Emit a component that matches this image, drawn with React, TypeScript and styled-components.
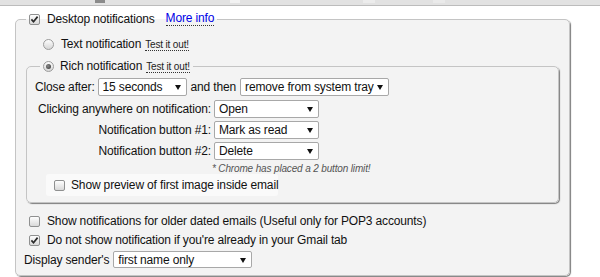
import React from "react";
import styled, { createGlobalStyle } from "styled-components";

const GlobalStyle = createGlobalStyle`
  html, body { margin: 0; padding: 0; background: #fff; }
  body {
    width: 600px; height: 277px; overflow: hidden;
    font-family: "Liberation Sans", Arial, sans-serif;
    font-size: 12px; letter-spacing: -0.15px; color: #111;
  }
`;

const TopStrip = styled.div`
  height: 5px;
  background: #e2e2e2;
  border-bottom: 1px solid #bcbcbc;
  display: flex;
  align-items: flex-start;
`;

const StripMark = styled.span<{ $x: number; $w: number; $c: string }>`
  margin-left: ${(p) => p.$x}px;
  width: ${(p) => p.$w}px;
  height: 3px;
  background: ${(p) => p.$c};
`;

const Panel = styled.fieldset`
  box-sizing: border-box;
  min-width: 0;
  margin: 6px 0 0 15px;
  width: 555px;
  border: 1px solid #c4c4c4;
  border-radius: 5px;
  background: #f3f3f3;
  box-shadow: 1px 1px 1px #7d7d7d;
  padding: 10px 10px 7px 10px;
`;

const SubPanel = styled.fieldset`
  box-sizing: border-box;
  min-width: 0;
  margin: 7px 0 0 0;
  border: 1px solid #c4c4c4;
  border-radius: 5px;
  background: #f3f3f3;
  box-shadow: 1px 1px 1px #7d7d7d;
  padding: 5px 8px 6px 8px;
`;

const Legend = styled.legend<{ $shift?: number }>`
  display: flex;
  align-items: center;
  height: 14px;
  line-height: 14px;
  padding: 0 3px;
  margin-left: ${(p) => p.$shift ?? 0}px;
  white-space: nowrap;
`;

const Row = styled.div<{ $mt?: number; $ml?: number; $h?: number; $gap?: number }>`
  display: flex;
  align-items: center;
  height: ${(p) => p.$h ?? 16}px;
  margin-top: ${(p) => p.$mt ?? 0}px;
  margin-left: ${(p) => p.$ml ?? 0}px;
  gap: ${(p) => p.$gap ?? 7}px;
  white-space: nowrap;
`;

const Label = styled.span<{ $ml?: number; $mr?: number }>`
  white-space: nowrap;
  margin-left: ${(p) => p.$ml ?? 0}px;
  margin-right: ${(p) => p.$mr ?? 0}px;
`;

const MoreInfo = styled.a`
  color: #0000e6;
  text-decoration: none;
  border-bottom: 1px dotted #333;
  line-height: 13px;
  margin-left: 11px;
  cursor: pointer;
`;

const TestLink = styled.span<{ $ml?: number }>`
  font-size: 10px;
  color: #222;
  border-bottom: 1px dotted #333;
  line-height: 11px;
  margin-left: ${(p) => p.$ml ?? 0}px;
  margin-top: 2px;
  cursor: pointer;
`;

const CheckBox = styled.span`
  flex: none;
  display: inline-flex;
  align-items: center;
  justify-content: center;
  box-sizing: border-box;
  width: 11px;
  height: 11px;
  border: 1px solid #8f9090;
  border-radius: 2px;
  background: linear-gradient(#fefefe, #d9d9d9);
`;

const RadioDot = styled.span<{ $on?: boolean }>`
  flex: none;
  display: inline-flex;
  align-items: center;
  justify-content: center;
  box-sizing: border-box;
  width: 11px;
  height: 11px;
  border: 1px solid #9c9c9c;
  border-radius: 50%;
  background: linear-gradient(#fdfdfd, #d6d6d6);
  &::after {
    content: "";
    display: ${(p) => (p.$on ? "block" : "none")};
    width: 5px;
    height: 5px;
    border-radius: 50%;
    background: radial-gradient(circle at 40% 40%, #8a8a8a, #333);
  }
`;

const Check = ({ on }: { on?: boolean }) => (
  <CheckBox>
    {on && (
      <svg width="9" height="9" viewBox="0 0 9 9">
        <path d="M1.4 4.4 L3.5 6.7 L7.6 1.6" fill="none" stroke="#2a2a2a" strokeWidth="1.7" />
      </svg>
    )}
  </CheckBox>
);

const SelectWrap = styled.span<{ $w: number; $h?: number }>`
  position: relative;
  flex: none;
  display: inline-flex;
  width: ${(p) => p.$w}px;
  height: ${(p) => p.$h ?? 18}px;
`;

const NativeSelect = styled.select`
  appearance: none;
  -webkit-appearance: none;
  box-sizing: border-box;
  width: 100%;
  height: 100%;
  margin: 0;
  border: 1px solid #a8a8a8;
  border-radius: 2px;
  background: #fff;
  font-family: "Liberation Sans", Arial, sans-serif;
  font-size: 12px;
  letter-spacing: -0.15px;
  color: #111;
  padding: 0 8px 0 4px;
  outline: none;
`;

const Arrow = styled.span`
  position: absolute;
  right: 6px;
  top: 50%;
  margin-top: -2px;
  width: 0;
  height: 0;
  border-left: 3.5px solid transparent;
  border-right: 3.5px solid transparent;
  border-top: 5px solid #111;
  pointer-events: none;
`;

const Select = ({ w, h, value, options }: { w: number; h?: number; value: string; options: string[] }) => (
  <SelectWrap $w={w} $h={h}>
    <NativeSelect defaultValue={value}>
      {options.map((o) => (
        <option key={o}>{o}</option>
      ))}
    </NativeSelect>
    <Arrow />
  </SelectWrap>
);

const OptionGrid = styled.div`
  display: grid;
  grid-template-columns: max-content max-content;
  column-gap: 3px;
  row-gap: 3px;
  margin: 4px 0 0 3px;
  align-items: center;
`;

const GridLabel = styled.span`
  justify-self: end;
  white-space: nowrap;
`;

const Note = styled.span`
  grid-column: 2;
  font-size: 10px;
  font-style: italic;
  color: #555;
  line-height: 11px;
  margin-left: -2px;
  white-space: nowrap;
`;

const PreviewBox = styled.div`
  display: flex;
  align-items: center;
  gap: 6px;
  box-sizing: border-box;
  width: 232px;
  height: 22px;
  margin-left: 11px;
  padding-left: 8px;
  background: #fafafa;
  border-radius: 3px;
`;

export default function App() {
  const secs = ["5 seconds", "10 seconds", "15 seconds", "30 seconds", "never"];
  const acts = ["Open", "Mark as read", "Delete", "Archive", "Nothing"];
  return (
    <>
      <GlobalStyle />
      <TopStrip>
        <StripMark $x={95} $w={10} $c="#8a8a8a" />
        <StripMark $x={125} $w={10} $c="#f2f2f2" />
        <StripMark $x={123} $w={12} $c="#ececec" />
        <StripMark $x={58} $w={12} $c="#eaeaea" />
      </TopStrip>
      <Panel>
        <Legend>
          <Check on />
          <Label $ml={7}>Desktop notifications</Label>
          <MoreInfo>More info</MoreInfo>
        </Legend>

        <Row $ml={17}>
          <RadioDot />
          <Label>Text notification</Label>
          <TestLink $ml={-3}>Test it out!</TestLink>
        </Row>

        <SubPanel>
          <Legend $shift={5}>
            <RadioDot $on />
            <Label $ml={6}>Rich notification</Label>
            <TestLink $ml={4}>Test it out!</TestLink>
          </Legend>

          <Row $h={18} $gap={0}>
            <Label $mr={3}>Close after:</Label>
            <Select w={89} value="15 seconds" options={secs} />
            <Label $ml={4} $mr={4}>and then</Label>
            <Select
              w={149}
              value="remove from system tray"
              options={["remove from system tray", "keep in system tray"]}
            />
          </Row>

          <OptionGrid>
            <GridLabel>Clicking anywhere on notification:</GridLabel>
            <Select w={105} value="Open" options={acts} />
            <GridLabel>Notification button #1:</GridLabel>
            <Select w={105} value="Mark as read" options={acts} />
            <GridLabel>Notification button #2:</GridLabel>
            <Select w={105} value="Delete" options={acts} />
            <Note>* Chrome has placed a 2 button limit!</Note>
          </OptionGrid>

          <PreviewBox>
            <Check />
            <Label>Show preview of first image inside email</Label>
          </PreviewBox>
        </SubPanel>

        <Row $mt={10} $ml={3}>
          <Check />
          <Label>Show notifications for older dated emails (Useful only for POP3 accounts)</Label>
        </Row>
        <Row $mt={3} $ml={3}>
          <Check on />
          <Label>Do not show notification if you're already in your Gmail tab</Label>
        </Row>
        <Row $mt={3} $ml={-2} $h={17} $gap={4}>
          <Label>Display sender's</Label>
          <Select
            w={139}
            h={17}
            value="first name only"
            options={["first name only", "full name", "email address"]}
          />
        </Row>
      </Panel>
    </>
  );
}
